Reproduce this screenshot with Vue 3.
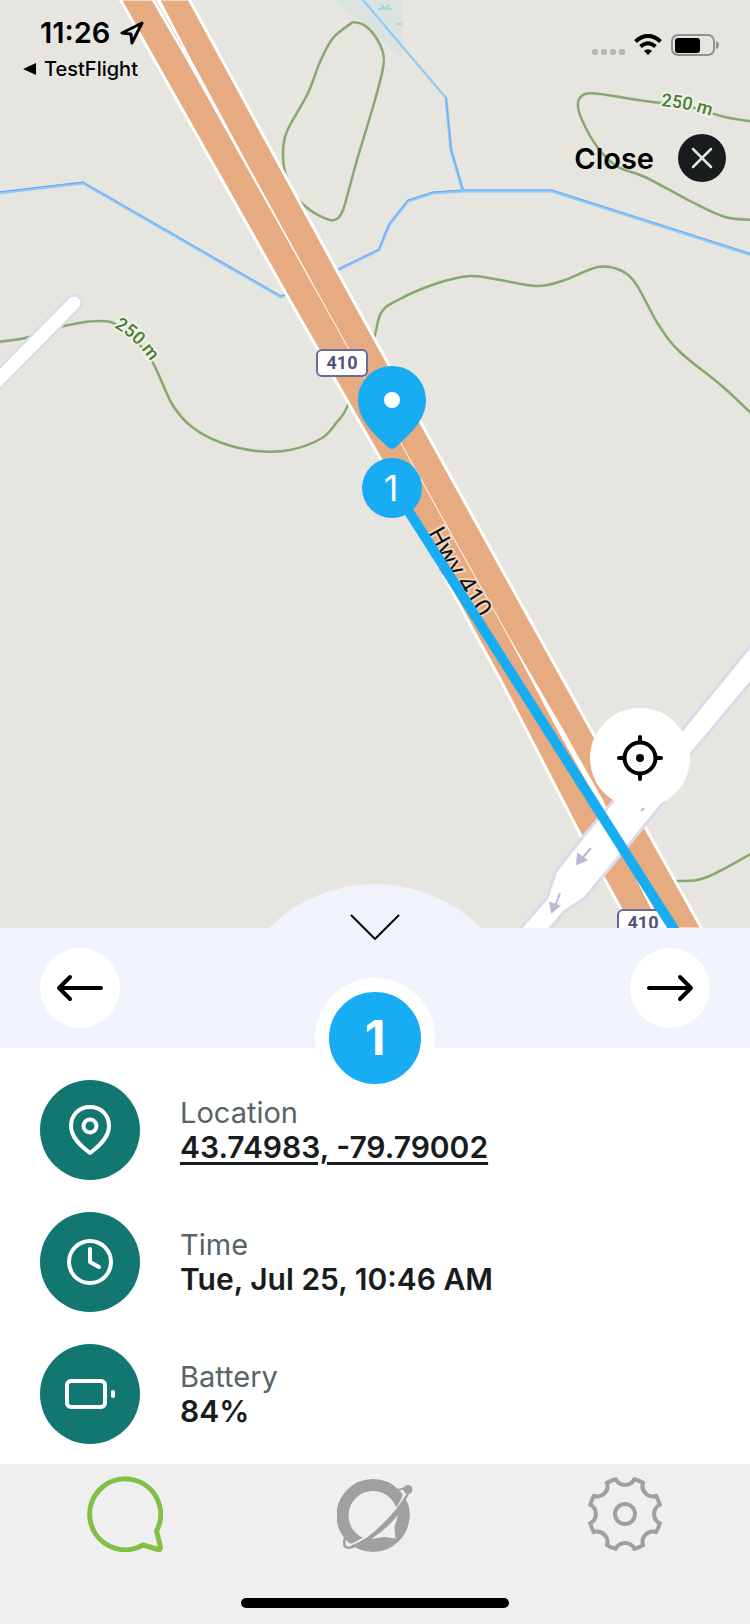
<template>
  <div class="screen">
    <section class="map">
      <svg class="map-canvas" viewBox="0 0 750 928" preserveAspectRatio="xMidYMax slice" role="img" aria-label="Map of Hwy 410">
        <defs>
          <path id="contour-label-left" d="M114 327 Q137 340 153 365" />
          <path id="contour-label-right" d="M661 106 Q690 108 722 120" />
          <path id="highway-label" d="M427 533 Q452 580 485 628" />
        </defs>

        <!-- water -->
        <path class="marsh" d="M334 0 H402 V57 Q366 28 334 0Z" />
        <path class="reed" d="M378 9 h14 M381 5 l4 4 l4 -4 M397 24 h5" />
        <path class="stream thin" d="M363 0 L446 98" />
        <g v-for="d in streams" :key="d">
          <path class="stream" :d="d" />
          <path class="stream edge" :d="d" />
        </g>

        <!-- contours -->
        <path v-for="(line, i) in contours" :key="i" class="contour" :d="smooth(line)" />

        <!-- highway -->
        <path class="highway" d="M120 -1 L289 299 L380 458 L478 639 L500 679 L582 838 L632 929 H702 L645 827 L595 737 L530 620 L353 300 L189 -1Z" />
        <path class="median" d="M151 -1 L186 59 L238 152 L321 300 L443 520 L510 640 L529 676 L558 731 L599 804 L650 907 L662 929 H665 L626 857 L604 802 L564 731 L532 676 L511 640 L444 520 L322 300 L241 152 L191 59 L160 -1Z" />
        <path class="lane" d="M155 -1 L182 47" />

        <!-- local roads -->
        <path class="road-case" d="M-8 386 L74 303" />
        <path class="road-fill" d="M-8 386 L74 303" />
        <path class="street" d="M752 644 L682 730 L613 801 L582 838 L556 871 L547 898 L519 930 H549 L564 912 L585 898 L627 847 L663 803 L690 755 L752 681Z" />
        <g class="one-way">
          <path d="M591 848 L579 862" />
          <path d="M577 864 l1 -10 l8 6Z" />
          <path d="M560 893 L555 906" />
          <path d="M552 912 l-2 -9 l9 3Z" />
          <path d="M645 807 l-4 4" />
        </g>

        <!-- labels -->
        <text class="contour-label"><textPath href="#contour-label-left">250 m</textPath></text>
        <text class="contour-label"><textPath href="#contour-label-right">250 m</textPath></text>
        <g v-for="s in shields" :key="s.y">
          <rect class="shield" :x="s.x" :y="s.y" width="50" height="26" rx="5" />
          <text class="shield-text" :x="s.x + 25" :y="s.y + 19">410</text>
        </g>
        <text class="highway-text"><textPath href="#highway-label">Hwy 410</textPath></text>

        <!-- track -->
        <path class="track" d="M392 485 L677 934" />
        <path class="pin" d="M392 366 C373 366 358 381 358 400 C358 420 374 434 388 447 Q392 451 396 447 C410 434 426 420 426 400 C426 381 411 366 392 366Z" />
        <circle cx="392" cy="400" r="8" fill="#fff" />
        <circle class="pin" cx="392" cy="488" r="30" />
        <text class="point-text" x="391" y="501">1</text>
      </svg>

      <header class="status-bar">
        <div class="status-left">
          <div class="clock">
            <span>11:26</span>
            <svg width="24" height="24" viewBox="0 0 24 24">
              <path d="M22 2 L2 12 L11 13 L12 22Z" fill="none" stroke="#000" stroke-width="3" stroke-linejoin="round" />
            </svg>
          </div>
          <a class="back-app" href="#">
            <svg width="13" height="12" viewBox="0 0 13 12"><path d="M13 0 V12 L0 6Z" /></svg>
            TestFlight
          </a>
        </div>
        <div class="status-right">
          <span class="signal"><i v-for="n in 4" :key="n"></i></span>
          <svg width="28" height="21" viewBox="0 0 28 21" fill="none" stroke="#000" stroke-width="4">
            <path d="M1.500 7.500 Q14 -3.500 26.500 7.500" />
            <path d="M6.500 12.500 Q14 6 21.500 12.500" />
            <path d="M14 21 L10 17 Q14 13.500 18 17Z" fill="#000" stroke="none" />
          </svg>
          <svg width="49" height="22" viewBox="0 0 49 22">
            <rect x="1" y="1" width="42" height="20" rx="6" fill="none" stroke="#91918f" stroke-width="2" />
            <rect x="4" y="4" width="25" height="15" rx="3" />
            <path d="M45 7 Q48 8 48 11 T45 15Z" fill="#91918f" />
          </svg>
        </div>
      </header>

      <button class="close" type="button">
        <span>Close</span>
        <svg width="48" height="48" viewBox="0 0 48 48">
          <circle cx="24" cy="24" r="24" fill="#181c1d" />
          <path d="M15 15 L33 33 M33 15 L15 33" stroke="#e6e5e0" stroke-width="2.500" stroke-linecap="round" />
        </svg>
      </button>

      <button class="locate" type="button" aria-label="Center map">
        <svg width="50" height="50" viewBox="0 0 50 50" fill="none" stroke="#000" stroke-width="4" stroke-linecap="round">
          <circle cx="25" cy="25" r="15.500" />
          <circle cx="25" cy="25" r="4" fill="#000" stroke="none" />
          <path d="M25 4 V9 M25 41 V46 M4 25 H9 M41 25 H46" />
        </svg>
      </button>
    </section>

    <nav class="pager">
      <button class="collapse" type="button" aria-label="Collapse">
        <svg width="50" height="26" viewBox="0 0 50 26">
          <path d="M1 1 L25 25 L49 1" fill="none" stroke="#000" stroke-width="2" />
        </svg>
      </button>
      <button class="step" type="button" aria-label="Previous point">
        <svg width="48" height="28" viewBox="0 0 48 28"><path d="M45 14 H4 M14 3 L3 14 L14 25" /></svg>
      </button>
      <div class="badge">1</div>
      <button class="step" type="button" aria-label="Next point">
        <svg width="48" height="28" viewBox="0 0 48 28"><path d="M3 14 H44 M34 3 L45 14 L34 25" /></svg>
      </button>
    </nav>

    <main class="details">
      <div v-for="item in details" :key="item.label" class="detail">
        <span class="detail-icon">
          <svg width="56" height="56" viewBox="0 0 56 56" fill="none" stroke="#fff" stroke-width="4" stroke-linecap="round" stroke-linejoin="round">
            <template v-if="item.icon === 'pin'">
              <path d="M28 5 C17 5 9 13 9 24 C9 36 20 45 28 51 C36 45 47 36 47 24 C47 13 39 5 28 5Z" />
              <circle cx="28" cy="24" r="6.500" />
            </template>
            <template v-else-if="item.icon === 'clock'">
              <circle cx="28" cy="28" r="21" />
              <path d="M28 15 V28 L37 33" />
            </template>
            <template v-else>
              <rect x="5" y="15" width="38" height="26" rx="4" />
              <path d="M51 26 V30" />
            </template>
          </svg>
        </span>
        <div class="detail-text">
          <div class="label">{{ item.label }}</div>
          <a v-if="item.link" class="value" href="#">{{ item.value }}</a>
          <div v-else class="value">{{ item.value }}</div>
        </div>
      </div>
    </main>

    <footer class="tabs">
      <div class="tab-row">
        <button type="button" aria-label="Messages">
          <svg width="76" height="76" viewBox="0 0 76 76">
            <path d="M56 69 A35.500 35.500 0 1 1 69.500 55 L73.500 71 Q73.500 74 71 73.500Z" fill="none" stroke="#82bf45" stroke-width="5" stroke-linejoin="round" />
          </svg>
        </button>
        <button type="button" aria-label="Tracking">
          <svg width="76" height="76" viewBox="1 0 76 76">
            <circle cx="37" cy="39.500" r="30.500" fill="none" stroke="#a0a0a0" stroke-width="12" />
            <path d="M26 66 Q47 52 64 31 L72 27 Q77 46 66 60 Q50 76 26 72Z" fill="#a0a0a0" />
            <path d="M60 31 Q67 23 70 15 L65 14 L67 18 Q65 25 60 31Z" fill="#efefef" />
            <path d="M9 62 Q6 73 14 71.500 Q28 68 47 49 Q67 30 74 13" fill="none" stroke="#a0a0a0" stroke-width="2.500" />
            <path d="M10.500 66 Q10 71 16 69 Q29 65 45 49 Q62 33 71 17 L68 15 L66 17 Q69 18 67 21 Q57 38 45 48 Q30 61 16 67.500 Q12 68 10.500 66Z" fill="#efefef" />
            <path d="M62 14 Q67 12 72 12" fill="none" stroke="#a0a0a0" stroke-width="2" />
            <path d="M35 63 Q50 54 62 39 L58.500 51 L59.500 62.500 L48 61Z" fill="#efefef" />
            <circle cx="72" cy="13.500" r="4.500" fill="#a0a0a0" />
          </svg>
        </button>
        <button type="button" aria-label="Settings">
          <svg width="76" height="76" viewBox="0 0 76 76" fill="none" stroke="#a0a0a0" stroke-width="4">
            <path :d="gear" />
            <circle cx="38" cy="38" r="10" />
          </svg>
        </button>
      </div>
      <div class="home-indicator"></div>
    </footer>
  </div>
</template>

<script setup>
const details = [
  { icon: 'pin', label: 'Location', value: '43.74983, -79.79002', link: true },
  { icon: 'clock', label: 'Time', value: 'Tue, Jul 25, 10:46 AM' },
  { icon: 'battery', label: 'Battery', value: '84%' }
]

const shields = [
  { x: 317, y: 350 },
  { x: 618, y: 910 }
]

const streams = [
  'M-2 193 L83 183 L281 297 L338 270 L379 250 L389 225 L408 201 L433 193 L463 191 H552 L752 255',
  'M446 98 L451 150 L463 191'
]

const contours = [
  [[353, 22], [333, 38], [320, 62], [308, 93], [290, 125], [285, 137], [283, 152], [285, 172], [295, 195], [310, 210], [330, 220], [338, 218], [343, 210], [348, 193], [357, 160], [375, 100], [383, 68], [383, 53], [375, 36], [364, 25], [353, 22]],
  [[-4, 342], [25, 338], [60, 327], [98, 321], [120, 327], [150, 358], [172, 404], [192, 427], [222, 443], [257, 451], [290, 450], [322, 438], [337, 422], [348, 405], [372, 345], [381, 313], [398, 300], [435, 284], [470, 276], [500, 280], [537, 286], [562, 281], [598, 267], [620, 270], [636, 284], [658, 324], [680, 352], [722, 386], [756, 418]],
  [[756, 122], [725, 117], [690, 107], [638, 100], [600, 94], [585, 94], [578, 103], [582, 120], [598, 148], [618, 167], [645, 177], [690, 201], [725, 217], [756, 220]],
  [[640, 878], [678, 881], [707, 877], [756, 851]]
]

// Catmull-Rom spline through the points, as cubic segments
function smooth(pts) {
  let d = `M${pts[0][0]} ${pts[0][1]}`
  for (let i = 0; i < pts.length - 1; i++) {
    const p0 = pts[i - 1] || pts[i]
    const p1 = pts[i]
    const p2 = pts[i + 1]
    const p3 = pts[i + 2] || p2
    const c1 = [p1[0] + (p2[0] - p0[0]) / 6, p1[1] + (p2[1] - p0[1]) / 6]
    const c2 = [p2[0] - (p3[0] - p1[0]) / 6, p2[1] - (p3[1] - p1[1]) / 6]
    d += ` C${c1[0]} ${c1[1]} ${c2[0]} ${c2[1]} ${p2[0]} ${p2[1]}`
  }
  return d
}

// eight teeth with round notches between them
function gearPath() {
  const at = (deg) => {
    const a = (deg * Math.PI) / 180
    return `${38 + 36 * Math.cos(a)} ${38 + 36 * Math.sin(a)}`
  }
  let d = `M${at(-15)}`
  for (let k = 0; k < 8; k++) {
    d += ` A10.500 10.500 0 0 0 ${at(k * 45 + 15)} A36 36 0 0 1 ${at(k * 45 + 30)}`
  }
  return d + 'Z'
}
const gear = gearPath()
</script>

<style>
body {
  margin: 0;
}
</style>

<style scoped>
.screen {
  min-height: 100vh;
  display: flex; flex-direction: column;
  background: #fff;
  color: #181c1d;
  font-family: Inter, "Liberation Sans", sans-serif;
}

button {
  border: 0;
  padding: 0;
  background: none;
  font: inherit;
  color: #000;
  cursor: pointer;
}
svg { display: block; }

.map {
  position: relative;
  flex: 1;
  min-height: 480px;
  overflow: hidden;
  background: #e6e5e0;
}
.map-canvas {
  position: absolute; inset: 0;
  width: 100%; height: 100%;
}
.marsh { fill: #dbe3e1; }
.reed { fill: none; stroke: #a9d6dd; stroke-width: 2; }
.stream { fill: none; stroke: #8ccaf8; stroke-width: 3; stroke-linejoin: round; }
.stream.thin { stroke-width: 2; }
.stream.edge { stroke: #74a4ee; stroke-width: 1; transform: translateY(-1px); }
.contour { fill: none; stroke: #87a870; stroke-width: 2.5; }
.highway { fill: #e6ab80; stroke: #fff; stroke-width: 3; }
.median { fill: #fff; }
.lane { stroke: #dfcdbd; stroke-width: 1; }
.road-case { stroke: #dadae8; stroke-width: 17; stroke-linecap: round; }
.road-fill { stroke: #fff; stroke-width: 13; stroke-linecap: round; }
.street { fill: #fff; stroke: #dadae8; stroke-width: 3; }
.one-way { fill: #b9bbd0; stroke: #b9bbd0; stroke-width: 2; }
.contour-label {
  font: 500 18px Roboto, sans-serif;
  fill: #47802c;
  stroke: #f1f1ec; stroke-width: 4; paint-order: stroke;
}
.shield { fill: #fff; stroke: #666b9c; stroke-width: 2; }
.shield-text {
  font: 700 18px Roboto, sans-serif;
  fill: #4f5479;
  text-anchor: middle;
}
.highway-text {
  font: 400 25px "Noto Sans", sans-serif;
  fill: #111;
  stroke: #f1d3bd; stroke-width: 4; paint-order: stroke;
}
.track { stroke: #18adf2; stroke-width: 10; }
.pin { fill: #18adf2; }
.point-text {
  font-size: 36px;
  fill: #fff;
  text-anchor: middle;
}

.status-bar {
  position: relative;
  display: flex; justify-content: space-between;
  padding: 16px 30px 0 23px;
  color: #000;
}
.clock {
  display: flex; align-items: center; gap: 10px;
  padding-left: 17px;
  font-size: 29px; font-weight: 600; line-height: 34px;
}
.back-app {
  display: flex; align-items: center; gap: 8px;
  margin-top: 6px;
  font-size: 20px; font-weight: 500; line-height: 26px;
  color: #000;
  text-decoration: none;
}
.status-right {
  display: flex; align-items: flex-start; gap: 9px;
  padding-top: 18px;
}
.signal { display: flex; gap: 3px; padding-top: 15px; }
.signal i { width: 6px; height: 6px; border-radius: 2px; background: #b7b6b3; }

.close {
  position: absolute; top: 134px; right: 24px;
  display: flex; align-items: center; gap: 24px;
  font-size: 29px; font-weight: 600;
}
.locate {
  position: absolute; right: 60px; bottom: 120px;
  width: 100px; height: 100px;
  display: grid; place-items: center;
  border-radius: 50%;
  background: #fff;
}

.pager {
  position: relative;
  display: flex; justify-content: space-between; align-items: center;
  height: 120px;
  padding: 0 40px;
  background: #f1f3fc;
}
.collapse {
  position: absolute; bottom: 100%; left: 50%;
  width: 300px; height: 44px;
  transform: translateX(-50%);
  clip-path: inset(0 0 -40px 0);
}
.collapse::before {
  content: "";
  position: absolute; top: 0; left: 0;
  width: 300px; height: 300px;
  border-radius: 50%;
  background: #f1f3fc;
}
.collapse svg { position: absolute; top: 30px; left: 125px; }
.step {
  width: 80px; height: 80px;
  display: grid; place-items: center;
  border-radius: 50%;
  background: #fff;
}
.step path {
  fill: none;
  stroke: #000; stroke-width: 4;
  stroke-linecap: round; stroke-linejoin: round;
}
.badge {
  position: absolute; top: 50px; left: 50%;
  width: 92px; height: 92px;
  display: grid; place-items: center;
  transform: translateX(-50%);
  border: 14px solid #fff;
  border-radius: 50%;
  background: #18adf2;
  color: #fff;
  font-size: 48px; font-weight: 700; line-height: 48px;
}

.details {
  display: flex; flex-direction: column; gap: 32px;
  padding: 32px 40px 20px;
}
.detail { display: flex; align-items: center; gap: 40px; }
.detail-icon {
  width: 100px; height: 100px;
  display: grid; place-items: center;
  flex: none;
  border-radius: 50%;
  background: #127770;
}
.detail-text { line-height: 35px; }
.label { font-size: 29px; color: #566466; }
.value { display: block; font-size: 30px; font-weight: 600; color: #181c1d; }
a.value {
  text-decoration-thickness: 3px;
  text-underline-offset: 4px;
}

.tabs {
  display: flex; flex-direction: column; align-items: center; justify-content: space-between;
  height: 132px;
  padding: 12px 0 16px;
  background: #efefef;
}
.tab-row {
  width: 100%;
  display: grid; grid-template-columns: repeat(3, 1fr); justify-items: center;
}
.home-indicator {
  width: 268px; height: 10px;
  border-radius: 5px;
  background: #000;
}
</style>
